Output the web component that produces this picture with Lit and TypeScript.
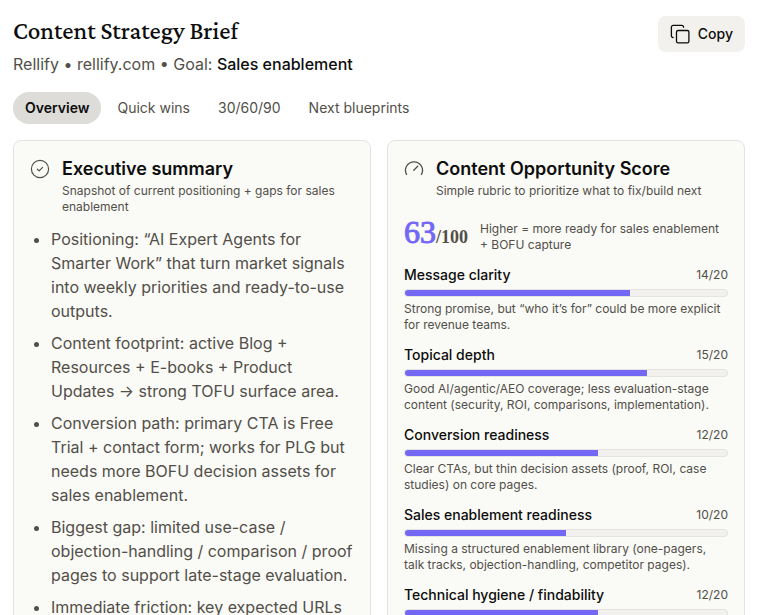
import { LitElement, html, css } from "lit";
import { customElement, state } from "lit/decorators.js";

const tabs = ["Overview", "Quick wins", "30/60/90", "Next blueprints"];

const summary = [
  "Positioning: “AI Expert Agents for Smarter Work” that turn market signals into weekly priorities and ready-to-use outputs.",
  "Content footprint: active Blog + Resources + E-books + Product Updates → strong TOFU surface area.",
  "Conversion path: primary CTA is Free Trial + contact form; works for PLG but needs more BOFU decision assets for sales enablement.",
  "Biggest gap: limited use-case / objection-handling / comparison / proof pages to support late-stage evaluation.",
  "Immediate friction: key expected URLs",
];

interface Score {
  label: string;
  value: number;
  note?: string;
}

const scores: Score[] = [
  { label: "Message clarity", value: 14, note: "Strong promise, but “who it’s for” could be more explicit for revenue teams." },
  { label: "Topical depth", value: 15, note: "Good AI/agentic/AEO coverage; less evaluation-stage content (security, ROI, comparisons, implementation)." },
  { label: "Conversion readiness", value: 12, note: "Clear CTAs, but thin decision assets (proof, ROI, case studies) on core pages." },
  { label: "Sales enablement readiness", value: 10, note: "Missing a structured enablement library (one-pagers, talk tracks, objection-handling, competitor pages)." },
  { label: "Technical hygiene / findability", value: 12 },
];

@customElement("app-root")
export class AppRoot extends LitElement {
  @state() private active = 0;

  static styles = css`
    :host {
      display: block;
      box-sizing: border-box;
      height: 100vh;
      overflow-y: auto;
      scrollbar-width: none;
      padding: 16px 14px 16px 13px;
      background: #fff;
      color: #0d0d0d;
      font-family: Inter, "Liberation Sans", sans-serif;
      font-size: 14px;
      line-height: 20px;
    }
    h1, h2, h3, p, ul { margin: 0; padding: 0; }
    button { font: inherit; border: 0; cursor: pointer; }
    .header { display: flex; justify-content: space-between; align-items: flex-start; }
    .title {
      font-family: "Crimson Pro", "Liberation Serif", serif;
      font-size: 25px;
      font-weight: 500;
      line-height: 30px;
    }
    .meta { font-size: 16px; line-height: 24px; margin-top: 6px; color: #524f49; }
    .goal { font-weight: 500; color: #0d0d0d; }
    .copy {
      display: flex;
      align-items: center;
      gap: 8px;
      height: 36px;
      padding: 0 12px;
      border-radius: 8px;
      background: #f2f1ed;
      color: #0d0d0d;
      font-weight: 500;
    }
    .tabs { display: flex; gap: 4px; margin: 16px 0; }
    .tab {
      height: 32px;
      padding: 0 12px;
      border-radius: 16px;
      background: transparent;
      color: #524f49;
      font-weight: 400;
    }
    .tab.active { background: #dddcd8; color: #0d0d0d; font-weight: 600; }
    .cards { display: grid; grid-template-columns: 1fr 1fr; gap: 16px; }
    .card {
      padding: 16px;
      border: 1px solid #e4e3df;
      border-radius: 8px;
      background: #fafaf6;
      min-width: 0;
    }
    .head { display: flex; gap: 12px; color: #524f49; }
    .icon { flex: none; display: block; }
    .head .icon { margin-top: 2px; }
    .card-title { font-size: 18px; line-height: 24px; font-weight: 600; color: #0d0d0d; }
    .small { font-size: 12px; line-height: 16px; color: #524f49; }
    .head .small { margin-top: 2px; }
    .list {
      display: flex;
      flex-direction: column;
      gap: 8px;
      margin-top: 12px;
      padding-left: 21px;
      font-size: 16px;
      line-height: 24px;
      color: #524f49;
    }
    .total { display: flex; align-items: flex-end; gap: 12px; height: 42px; margin: 12px 0; }
    .number {
      flex: none;
      display: flex;
      align-items: baseline;
      font-family: "Liberation Serif", serif;
      font-size: 32px;
      line-height: 42px;
      color: #7467f5;
      -webkit-text-stroke: 1px currentColor;
    }
    .of {
      font-size: 18px;
      line-height: 20px;
      font-weight: 700;
      color: #524f49;
      -webkit-text-stroke: 0;
    }
    .scores { display: flex; flex-direction: column; gap: 12px; }
    .score { display: flex; flex-direction: column; gap: 4px; }
    .row { display: flex; justify-content: space-between; align-items: center; }
    .label { font-size: 14px; line-height: 20px; font-weight: 500; }
    .bar {
      box-sizing: border-box;
      height: 8px;
      border: 1px solid #e4e3df;
      border-radius: 4px;
      background: #f2f1ed;
      overflow: hidden;
    }
    .fill { height: 100%; background: #7467f5; }
  `;

  private renderHead(icon: unknown, title: string, sub: string) {
    return html`<div class="head">
      ${icon}
      <div>
        <h2 class="card-title">${title}</h2>
        <p class="small">${sub}</p>
      </div>
    </div>`;
  }

  private checkIcon = html`<svg class="icon" width="20" height="20" viewBox="0 0 20 20" fill="none" stroke="currentColor" stroke-width="1.2" stroke-linecap="round" stroke-linejoin="round" aria-hidden="true">
    <circle cx="10" cy="10" r="8.6" /><path d="M7.400 10.200l1.800 1.700 3.400-3.500" />
  </svg>`;

  private gaugeIcon = html`<svg class="icon" width="20" height="20" viewBox="0 0 20 20" fill="none" stroke="currentColor" stroke-width="1.3" stroke-linecap="round" stroke-linejoin="round" aria-hidden="true">
    <path d="M2.600 15.500a8.500 8.500 0 1 1 14.800 0M9.800 11.200l3.900-3.900" />
  </svg>`;

  private copyIcon = html`<svg class="icon" width="20" height="20" viewBox="0 0 20 20" fill="none" stroke="currentColor" stroke-width="1.3" stroke-linecap="round" stroke-linejoin="round" aria-hidden="true">
    <rect x="6.5" y="6.5" width="12.4" height="12.4" rx="1.6" />
    <path d="M3.200 13.600a1.800 1.800 0 0 1-1.800-1.800V3.200a1.800 1.800 0 0 1 1.800-1.800h8.600a1.800 1.800 0 0 1 1.800 1.800" />
  </svg>`;

  render() {
    return html`
      <header class="header">
        <div>
          <h1 class="title">Content Strategy Brief</h1>
          <p class="meta">Rellify • rellify.com • Goal: <span class="goal">Sales enablement</span></p>
        </div>
        <button class="copy">${this.copyIcon}Copy</button>
      </header>
      <nav class="tabs" role="tablist">
        ${tabs.map((t, i) => html`<button
          class="tab ${i === this.active ? "active" : ""}"
          role="tab"
          aria-selected=${i === this.active}
          @click=${() => (this.active = i)}
        >${t}</button>`)}
      </nav>
      <main class="cards">
        <section class="card">
          ${this.renderHead(this.checkIcon, "Executive summary", "Snapshot of current positioning + gaps for sales enablement")}
          <ul class="list">${summary.map((s) => html`<li>${s}</li>`)}</ul>
        </section>
        <section class="card">
          ${this.renderHead(this.gaugeIcon, "Content Opportunity Score", "Simple rubric to prioritize what to fix/build next")}
          <div class="total">
            <div class="number">63<span class="of">/100</span></div>
            <p class="small">Higher = more ready for sales enablement + BOFU capture</p>
          </div>
          <div class="scores">
            ${scores.map((s) => html`<div class="score">
              <div class="row"><h3 class="label">${s.label}</h3><span class="small">${s.value}/20</span></div>
              <div class="bar"><div class="fill" style="width:${s.value * 5}%"></div></div>
              ${s.note ? html`<p class="small">${s.note}</p>` : ""}
            </div>`)}
          </div>
        </section>
      </main>
    `;
  }
}
